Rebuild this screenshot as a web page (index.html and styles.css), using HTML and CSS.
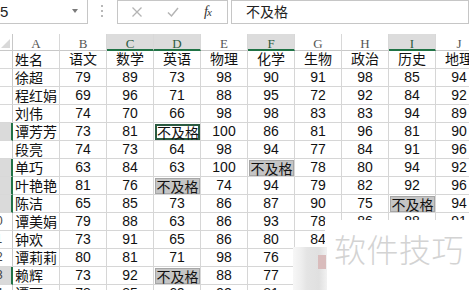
FILE: index.html
```html
<!DOCTYPE html>
<html lang="zh">
<head>
<meta charset="utf-8">
<link rel="stylesheet" href="styles.css">
</head>
<body>
<div class="fbar">
  <div class="namebox"><span class="nb-text">5</span><span class="caret"></span></div>
  <div class="grip"><i></i><i></i><i></i></div>
  <div class="btns">
    <svg class="ic" width="12" height="12" viewBox="0 0 12 12"><path d="M1.5 1.5 L10.5 10.5 M10.5 1.5 L1.5 10.5" stroke="#b4b4b4" stroke-width="1.3" fill="none"/></svg>
    <svg class="ic" width="12" height="12" viewBox="0 0 12 12"><path d="M1 6.5 L4.5 10 L11 2" stroke="#b4b4b4" stroke-width="1.5" fill="none"/></svg>
    <span class="fx">f<small>x</small></span>
  </div>
  <div class="finput">不及格</div>
</div>

<div class="sheet">
  <div class="corner"><span class="tri"></span></div>
  <div class="ch">A</div><div class="ch">B</div><div class="ch on">C</div><div class="ch on">D</div><div class="ch">E</div><div class="ch on">F</div><div class="ch">G</div><div class="ch">H</div><div class="ch on">I</div><div class="ch">J</div>

  <div class="rh"><span>1</span></div><div class="c l">姓名</div><div class="c">语文</div><div class="c">数学</div><div class="c">英语</div><div class="c">物理</div><div class="c">化学</div><div class="c">生物</div><div class="c">政治</div><div class="c">历史</div><div class="c">地理</div>
  <div class="rh"><span>2</span></div><div class="c l">徐超</div><div class="c">79</div><div class="c">89</div><div class="c">73</div><div class="c">98</div><div class="c">90</div><div class="c">91</div><div class="c">98</div><div class="c">85</div><div class="c">94</div>
  <div class="rh"><span>3</span></div><div class="c l">程红娟</div><div class="c">69</div><div class="c">96</div><div class="c">71</div><div class="c">88</div><div class="c">95</div><div class="c">72</div><div class="c">92</div><div class="c">84</div><div class="c">92</div>
  <div class="rh"><span>4</span></div><div class="c l">刘伟</div><div class="c">74</div><div class="c">70</div><div class="c">66</div><div class="c">98</div><div class="c">98</div><div class="c">83</div><div class="c">83</div><div class="c">94</div><div class="c">89</div>
  <div class="rh on"><span>5</span></div><div class="c l">谭芳芳</div><div class="c">73</div><div class="c">81</div><div class="c box"><div class="act">不及格</div></div><div class="c">100</div><div class="c">86</div><div class="c">81</div><div class="c">96</div><div class="c">81</div><div class="c">90</div>
  <div class="rh"><span>6</span></div><div class="c l">段亮</div><div class="c">74</div><div class="c">73</div><div class="c">64</div><div class="c">98</div><div class="c">94</div><div class="c">77</div><div class="c">84</div><div class="c">91</div><div class="c">96</div>
  <div class="rh on"><span>7</span></div><div class="c l">单巧</div><div class="c">63</div><div class="c">84</div><div class="c">63</div><div class="c">100</div><div class="c box"><div class="hl">不及格</div></div><div class="c">78</div><div class="c">80</div><div class="c">94</div><div class="c">92</div>
  <div class="rh on"><span>8</span></div><div class="c l">叶艳艳</div><div class="c">81</div><div class="c">76</div><div class="c box"><div class="hl">不及格</div></div><div class="c">74</div><div class="c">94</div><div class="c">79</div><div class="c">82</div><div class="c">92</div><div class="c">96</div>
  <div class="rh on"><span>9</span></div><div class="c l">陈洁</div><div class="c">65</div><div class="c">85</div><div class="c">73</div><div class="c">86</div><div class="c">87</div><div class="c">90</div><div class="c">75</div><div class="c box"><div class="hl">不及格</div></div><div class="c">94</div>
  <div class="rh"><span>10</span></div><div class="c l">谭美娟</div><div class="c">79</div><div class="c">88</div><div class="c">63</div><div class="c">86</div><div class="c">93</div><div class="c">78</div><div class="c">86</div><div class="c">88</div><div class="c">91</div>
  <div class="rh"><span>11</span></div><div class="c l">钟欢</div><div class="c">73</div><div class="c">91</div><div class="c">65</div><div class="c">86</div><div class="c">80</div><div class="c">84</div><div class="c"></div><div class="c"></div><div class="c"></div>
  <div class="rh"><span>12</span></div><div class="c l">谭莉莉</div><div class="c">80</div><div class="c">81</div><div class="c">71</div><div class="c">98</div><div class="c">76</div><div class="c"></div><div class="c"></div><div class="c"></div><div class="c"></div>
  <div class="rh on"><span>13</span></div><div class="c l">赖辉</div><div class="c">73</div><div class="c">92</div><div class="c box"><div class="hl">不及格</div></div><div class="c">88</div><div class="c">77</div><div class="c"></div><div class="c"></div><div class="c"></div><div class="c"></div>
  <div class="rh"><span>14</span></div><div class="c l">谭丽</div><div class="c">78</div><div class="c">85</div><div class="c">69</div><div class="c">92</div><div class="c">81</div><div class="c"></div><div class="c"></div><div class="c"></div><div class="c"></div>
</div>

<div class="wm">
  <div class="wm-logo"><span class="wm-pink"></span></div>
  <div class="wm-text">软件技巧</div>
</div>
</body>
</html>
```

FILE: styles.css
```css
* { box-sizing: border-box; margin: 0; padding: 0; }
html, body { width: 469px; height: 290px; overflow: hidden; background: #fff; }
body {
  position: relative;
  font-family: "Liberation Sans", "Noto Sans CJK SC", sans-serif;
  color: #111;
}

/* formula bar */
.fbar { display: flex; height: 24px; }
.namebox {
  width: 88px; height: 24px;
  border-right: 1px solid #c6c6c6; border-bottom: 1px solid #c6c6c6;
  display: flex; align-items: center; justify-content: space-between;
  padding: 0 9px 0 0;
  font-size: 15px; color: #222;
}
.caret {
  width: 0; height: 0;
  border-left: 3px solid transparent; border-right: 3px solid transparent;
  border-top: 4px solid #7a7a7a;
  margin-top: -2px;
}
.grip {
  width: 29px; height: 24px;
  display: flex; flex-direction: column; align-items: center; justify-content: center; gap: 3px;
  padding-right: 2px; padding-bottom: 2px;
}
.grip i { display: block; width: 2px; height: 2px; background: #b8b8b8; }
.btns {
  width: 111px; height: 24px;
  border: 1px solid #c6c6c6;
  display: flex; align-items: center;
  padding-left: 13px;
}
.btns .ic:nth-child(1) { margin-right: 24px; }
.btns .ic:nth-child(2) { margin-right: 25px; }
.fx {
  font-family: "Liberation Serif", serif; font-style: italic; font-size: 14px; color: #333;
  letter-spacing: -1px;
}
.fx small { font-size: 11px; }
.finput {
  flex: 1; height: 24px; margin-left: 3px;
  border: 1px solid #c6c6c6;
  padding-left: 14px;
  font-family: "Noto Sans CJK SC", sans-serif; font-size: 14px; line-height: 21px; color: #222;
}

/* sheet */
.sheet {
  margin-top: 10px;
  display: grid;
  grid-template-columns: 13px repeat(10, 47px);
  grid-template-rows: 17px repeat(14, 18px);
  width: 483px;
}
.corner { position: relative; border-right: 1px solid #c8c8c8; border-bottom: 1px solid #c8c8c8; }
.tri {
  position: absolute; right: 2px; bottom: 2px; width: 0; height: 0;
  border-left: 9px solid transparent; border-bottom: 9px solid #d9d9d9;
}
.ch {
  border-right: 1px solid #d8d8d8; border-bottom: 1px solid #c8c8c8;
  font-family: "Liberation Serif", serif; font-size: 13px; color: #555;
  text-align: center; line-height: 17px; padding-top: 1px;
}
.ch.on { background: #dcdcdc; border-bottom: 2px solid #217346; color: #2c5a3f; }
.rh {
  border-right: 1px solid #c8c8c8; border-bottom: 1px solid #d8d8d8;
  overflow: hidden; white-space: nowrap;
  font-size: 12px; color: #444; line-height: 17px;
}
.rh span { display: block; width: 26px; margin-left: -17px; text-align: center; }
.rh.on { background: #dadada; border-right: 2px solid #217346; }
.c {
  border-right: 1px solid #d6d6d6; border-bottom: 1px solid #d6d6d6;
  font-size: 14px; line-height: 17px; text-align: center;
  white-space: nowrap;
}
.c.l { text-align: left; padding-left: 2px; font-family: "Noto Sans CJK SC", sans-serif; }
.c.box { padding: 1px 0 0 1px; }
.hl {
  height: 100%; background: #c5c5c5; border: 1px solid #a6a6a6;
  font-family: "Noto Sans CJK SC", sans-serif; line-height: 14px;
}
.act {
  height: 100%; background: #fff; border: 2px solid #2a5a40;
  font-family: "Noto Sans CJK SC", sans-serif; line-height: 12px;
}

/* watermark overlay */
.wm { position: absolute; left: 325px; top: 220px; right: 0; bottom: 0; background: #fff; }
.wm-logo {
  position: absolute; left: -32px; top: 27px; width: 34px; bottom: 0;
  background: linear-gradient(to right, #f7f7f7 0, #eeeeee 8px, #e4e4e4 14px, #e0e0e0 26px, #f2f2f2 34px);
}
.wm-pink { position: absolute; left: 25px; top: 8px; width: 8px; height: 14px; background: #d9bcbc; }
.wm-text {
  position: absolute; left: 9px; top: 6px;
  font-family: "Noto Sans CJK SC", sans-serif; font-size: 32px; line-height: 44px;
  color: #d3d3d3; font-weight: 300; letter-spacing: 0.5px;
}
```
